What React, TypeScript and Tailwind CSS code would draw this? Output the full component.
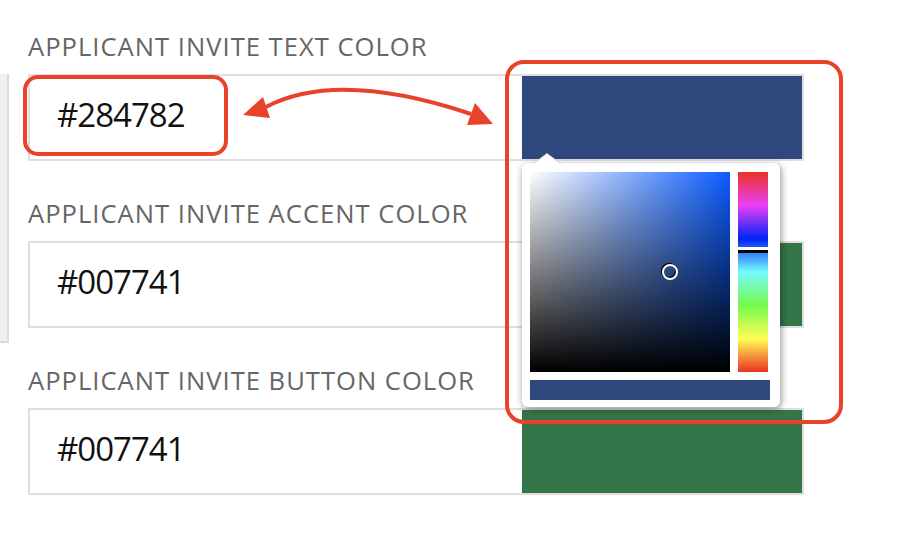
import React from 'react';

const fields = [
  { label: 'Applicant Invite Text Color', value: '#284782', swatch: 'bg-[#2e487d]' },
  { label: 'Applicant Invite Accent Color', value: '#007741', swatch: 'bg-[#347549]' },
  { label: 'Applicant Invite Button Color', value: '#007741', swatch: 'bg-[#347549]' },
];

function ColorField({ label, value, swatch }: { label: string; value: string; swatch: string }) {
  return (
    <div className="flex flex-col">
      <label className="h-[36px] mb-[9px] text-[25.6px] leading-[36px] tracking-[1px] uppercase text-[#666] whitespace-nowrap">
        {label}
      </label>
      <div className="flex h-[87px] w-[776px] border-2 border-[#dedede] bg-white">
        <div className="flex flex-1 items-center pl-[27px] pb-[6px] text-[33px] tracking-[-1px] text-[#111]">
          {value}
        </div>
        <div className={`w-[280px] ${swatch}`} />
      </div>
    </div>
  );
}

function ColorPicker() {
  return (
    <div className="absolute left-[522px] top-[163px] w-[258px] rounded-md bg-white pt-[9px] pl-[8px] pr-[10px] pb-[7px] shadow-[1px_2px_7px_rgba(0,0,0,0.45)]">
      {/* caret */}
      <svg className="absolute left-[11px] top-[-10px]" width="28" height="11" viewBox="0 0 28 11">
        <polygon points="0,11 14,0.5 28,11" fill="#fff" />
        <polyline points="0,11 14,0.5 28,11" fill="none" stroke="#d6d6d6" strokeWidth="1" />
      </svg>
      <div className="flex gap-[8px]">
        <div className="relative h-[200px] w-[200px] bg-[#0a5cff]">
          <div className="absolute inset-0 bg-[linear-gradient(to_right,#fff,rgba(255,255,255,0))]" />
          <div className="absolute inset-0 bg-[linear-gradient(to_bottom,rgba(0,0,0,0),#000)]" />
          <svg className="absolute left-[130px] top-[90px]" width="20" height="20" viewBox="0 0 20 20">
            <circle cx="9" cy="9" r="7" fill="none" stroke="#000" strokeWidth="2" />
            <circle cx="10" cy="10" r="7" fill="none" stroke="#fff" strokeWidth="2" />
          </svg>
        </div>
        <div className="relative h-[200px] w-[30px] bg-[linear-gradient(to_bottom,#ea3323,#ea3ff7,#0023f5,#75fbfd,#75f94c,#fffe54,#ea3323)]">
          <div className="absolute left-0 right-0 top-[75px] h-[6px] border-t-[3px] border-white bg-black" />
        </div>
      </div>
      <div className="mt-[8px] h-[20px] w-[240px] bg-[#2e487d]" />
    </div>
  );
}

export default function App() {
  return (
    <div className="relative h-[540px] w-[924px] overflow-hidden bg-white font-['Open_Sans',sans-serif]">
      <div className="flex">
        {/* edge of the panel on the left */}
        <div className="mt-[74px] h-[269px] w-[9px] shrink-0 self-start border-r-2 border-b-2 border-[#dcdcdc] bg-[#f0f0f0]" />
        <div className="ml-[19px] mt-[29px] flex flex-col gap-[35px]">
          {fields.map((f) => (
            <ColorField key={f.label} {...f} />
          ))}
        </div>
      </div>

      <ColorPicker />

      {/* annotations */}
      <svg className="pointer-events-none absolute inset-0" width="924" height="540" viewBox="0 0 924 540">
        <rect x="25" y="77" width="201" height="77" rx="13" fill="none" stroke="#e8432a" strokeWidth="4" />
        <rect x="507" y="62" width="334" height="360" rx="17" fill="none" stroke="#e8432a" strokeWidth="4" />
        <path d="M266 107 Q337.5 69.5 471 114" fill="none" stroke="#e8432a" strokeWidth="4" />
        <polygon points="243,115 263,97 270,118" fill="#e8432a" />
        <polygon points="493,124 475,103 467,125" fill="#e8432a" />
      </svg>
    </div>
  );
}
